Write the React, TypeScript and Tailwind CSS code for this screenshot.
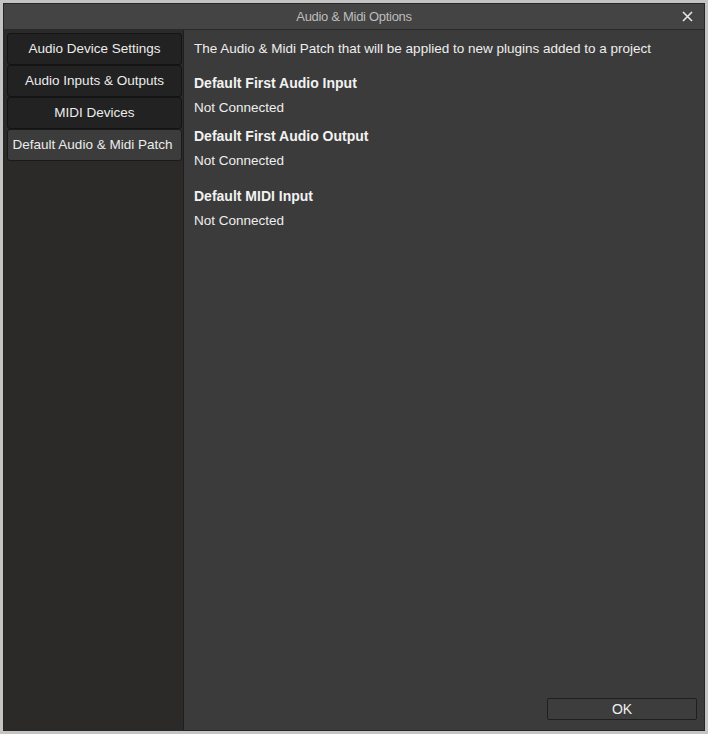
const NAV = [
  'Audio Device Settings',
  'Audio Inputs & Outputs',
  'MIDI Devices',
  'Default Audio & Midi Patch',
];

const PATCH = [
  { title: 'Default First Audio Input', mt: 'mt-[16px]' },
  { title: 'Default First Audio Output', mt: 'mt-[10px]' },
  { title: 'Default MIDI Input', mt: 'mt-[17px]' },
];

export default function App() {
  return (
    <div
      className="flex h-[734px] w-[708px] flex-col border-[3px] border-[#c4c4c4] bg-[#3b3b3b]"
      style={{ fontFamily: '"Liberation Sans", Arial, sans-serif' }}
    >
      <div className="flex h-full flex-col border border-[#262626]">
        {/* title bar */}
        <div className="relative flex h-[26px] shrink-0 items-center justify-center border-b border-[#2a2a2a] bg-[#444444]">
          <span className="text-[13px] tracking-[-0.3px] text-[#bdbdbd]">Audio &amp; Midi Options</span>
          <svg className="absolute right-[11px] top-[7px]" width="11" height="11" viewBox="0 0 11 11">
            <path d="M1 1L10 10M10 1L1 10" stroke="#e6e6e6" strokeWidth="1.6" />
          </svg>
        </div>

        <div className="flex min-h-0 flex-1">
          {/* left nav */}
          <div className="flex w-[180px] shrink-0 flex-col border-r border-[#1e1e1e] bg-[#2b2a28] pl-[3px] pr-[1px] pt-[3px]">
            {NAV.map((label, i) => {
              const active = i === NAV.length - 1;
              return (
                <div
                  key={label}
                  className={
                    active
                      ? 'flex h-[32px] items-center justify-center rounded-[3px] border border-[#1a1a1a] bg-[#3c3c3c] pr-[4px] text-[13.5px] text-[#ececec]'
                      : 'flex h-[32px] items-center justify-center rounded-[3px] border border-[#141414] bg-[#222222] text-[13.5px] text-[#ececec]'
                  }
                >
                  {label}
                </div>
              );
            })}
          </div>

          {/* right content */}
          <div className="flex flex-1 flex-col bg-[#3b3b3b] pl-[10px] pr-[7px] pt-[10px] pb-[10px]">
            <p className="text-[13.5px] leading-[18px] text-[#eeeeee]">
              The Audio &amp; Midi Patch that will be applied to new plugins added to a project
            </p>
            {PATCH.map((p) => (
              <div key={p.title} className={p.mt}>
                <div className="text-[14px] font-bold leading-[18px] text-[#f2f2f2]">{p.title}</div>
                <div className="mt-[7px] text-[13.5px] leading-[18px] text-[#eeeeee]">Not Connected</div>
              </div>
            ))}
            <div className="mt-auto flex justify-end">
              <button className="h-[22px] w-[150px] rounded-[2px] border border-[#1f1f1f] bg-[#3d3d3d] text-[14px] text-[#f0f0f0]">
                OK
              </button>
            </div>
          </div>
        </div>
      </div>
    </div>
  );
}
